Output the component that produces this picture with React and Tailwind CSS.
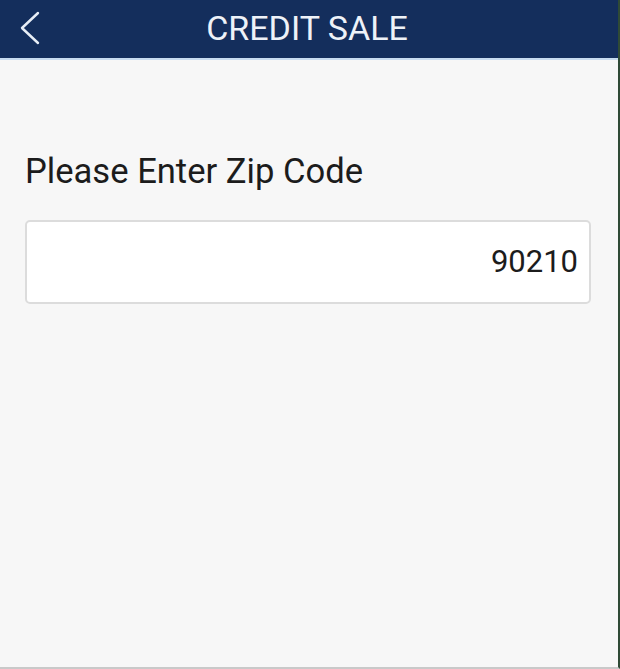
export default function App() {
  return (
    <div
      className="w-[620px] h-[669px] bg-[#f7f7f7] flex flex-col border-r-2 border-r-[#2f4a36] border-b-2 border-b-[#c9c9c9]"
      style={{ fontFamily: "Roboto, 'Liberation Sans', sans-serif" }}
    >
      <div className="h-[60px] bg-[#142e5c] border-b-2 border-b-[#c8dcf0] relative flex items-center justify-center shrink-0">
        <svg
          className="absolute left-[18px] top-[11px]"
          width="24"
          height="36"
          viewBox="0 0 24 36"
          fill="none"
          stroke="#e8eef6"
          strokeWidth="2.4"
          strokeLinecap="round"
          strokeLinejoin="round"
        >
          <path d="M20 2 L4 17 L20 32" />
        </svg>
        <span className="text-[34px] text-[#eef2f8] leading-none pb-[2px] pr-[4px]">CREDIT SALE</span>
      </div>
      <div className="pl-[25px] pt-[94px] pr-[27px]">
        <div className="text-[34.6px] text-[#1c1c1c] leading-none">Please Enter Zip Code</div>
        <div className="mt-[31px] h-[84px] bg-white border-2 border-[#dcdcdc] rounded-[5px] flex items-center justify-end pr-[11px]">
          <span className="text-[31px] text-[#1c1c1c] pt-[2px]">90210</span>
        </div>
      </div>
    </div>
  );
}
